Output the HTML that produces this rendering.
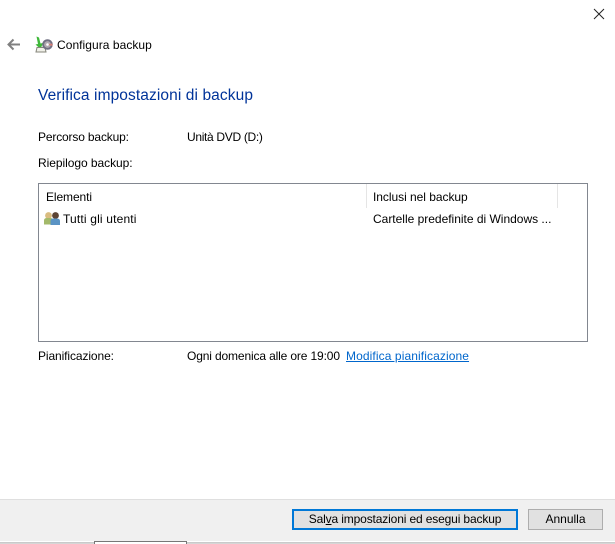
<!DOCTYPE html>
<html><head><meta charset="utf-8"><style>
html,body{margin:0;padding:0;width:615px;height:544px;overflow:hidden;background:#fff}
body{position:relative;font-family:"Liberation Sans",sans-serif;font-size:12px;color:#000}
.t{position:absolute;white-space:nowrap;line-height:16px;height:16px}
.b{position:absolute;box-sizing:border-box;background:#e1e1e1;text-align:center}
</style></head><body>
<svg style="position:absolute;left:0;top:0" width="615" height="544">
<path d="M594 9l10 10M604 9l-10 10" stroke="#222" stroke-width="1" fill="none"/>
<path d="M20 44.500H9M13.500 39.500l-5 5 5 5" stroke="#808080" stroke-width="2" fill="none"/>
<path d="M36.500 36.500l2.500 1 1.500 6 2.500-.5-2.500 6-5-4.500 2.500-.5z" fill="#3fb83a"/>
<path d="M37 47.500h8l1 4.500h-10z" fill="#f0f0e8" stroke="#85857a" stroke-width="1"/>
<circle cx="47.500" cy="44.500" r="5.300" fill="#6f6f82"/><circle cx="47.500" cy="44.500" r="3.400" fill="#b0a8b0"/><path d="M47.500 44.500l4.800-1 .2 2.500z" fill="#d87a70"/><circle cx="47.500" cy="44.500" r="1.300" fill="#fff"/>
<circle cx="48.500" cy="215.500" r="3.400" fill="#d9bc80"/><path d="M44 224.500v-4q0-2.500 3-2.500h3q3 0 3 2.500v4z" fill="#a3b96a"/>
<circle cx="55.500" cy="215.500" r="3.400" fill="#5c4434"/><path d="M50.500 225v-4q0-2.500 3-2.500h3q3.500 0 3.500 2.500v4z" fill="#5a93c4"/>
</svg>
<div class="t" style="left:57px;top:37px;letter-spacing:.05px">Configura backup</div>
<div class="t" style="left:38px;top:86px;height:20px;line-height:20px;font-size:15.500px;letter-spacing:.1px;color:#003399">Verifica impostazioni di backup</div>
<div class="t" style="left:38px;top:129px;letter-spacing:-.16px">Percorso backup:</div>
<div class="t" style="left:187px;top:129px;letter-spacing:-.32px">Unità DVD (D:)</div>
<div class="t" style="left:38px;top:155px;letter-spacing:-.05px">Riepilogo backup:</div>
<div style="position:absolute;left:38px;top:183px;width:550px;height:159px;box-sizing:border-box;border:1px solid #828790"></div>
<div style="position:absolute;left:366px;top:184px;width:1px;height:24px;background:#e5e5e5"></div>
<div style="position:absolute;left:557px;top:184px;width:1px;height:24px;background:#e5e5e5"></div>
<div class="t" style="left:46px;top:189px;letter-spacing:-.1px">Elementi</div>
<div class="t" style="left:373px;top:189px;letter-spacing:-.04px">Inclusi nel backup</div>
<div class="t" style="left:63px;top:211px;letter-spacing:.17px">Tutti gli utenti</div>
<div class="t" style="left:373px;top:211px;letter-spacing:-.01px">Cartelle predefinite di Windows ...</div>
<div class="t" style="left:38px;top:348px;letter-spacing:-.1px">Pianificazione:</div>
<div class="t" style="left:187px;top:348px;letter-spacing:-.14px">Ogni domenica alle ore 19:00</div>
<div class="t" style="left:346px;top:348px;letter-spacing:.1px;color:#0066cc;text-decoration:underline">Modifica pianificazione</div>
<div style="position:absolute;left:0;top:499px;width:615px;height:42px;background:#f0f0f0;border-top:1px solid #dfdfdf;box-sizing:border-box"></div>
<div style="position:absolute;left:0;top:541px;width:615px;height:3px;background:linear-gradient(#fff 0,#fff 1px,#c4c4c4 1px,#dcdcdc)"></div>
<div style="position:absolute;left:94px;top:541px;width:93px;height:3px;background:#fff;border:1px solid #777;border-bottom:0;box-sizing:border-box"></div>
<div class="b" style="left:292px;top:509px;width:226px;height:21px;border:2px solid #0078d7;line-height:17px;letter-spacing:-.14px">Sal<u>v</u>a impostazioni ed esegui backup</div>
<div class="b" style="left:528px;top:509px;width:75px;height:21px;border:1px solid #adadad;line-height:19px">Annulla</div>
</body></html>
